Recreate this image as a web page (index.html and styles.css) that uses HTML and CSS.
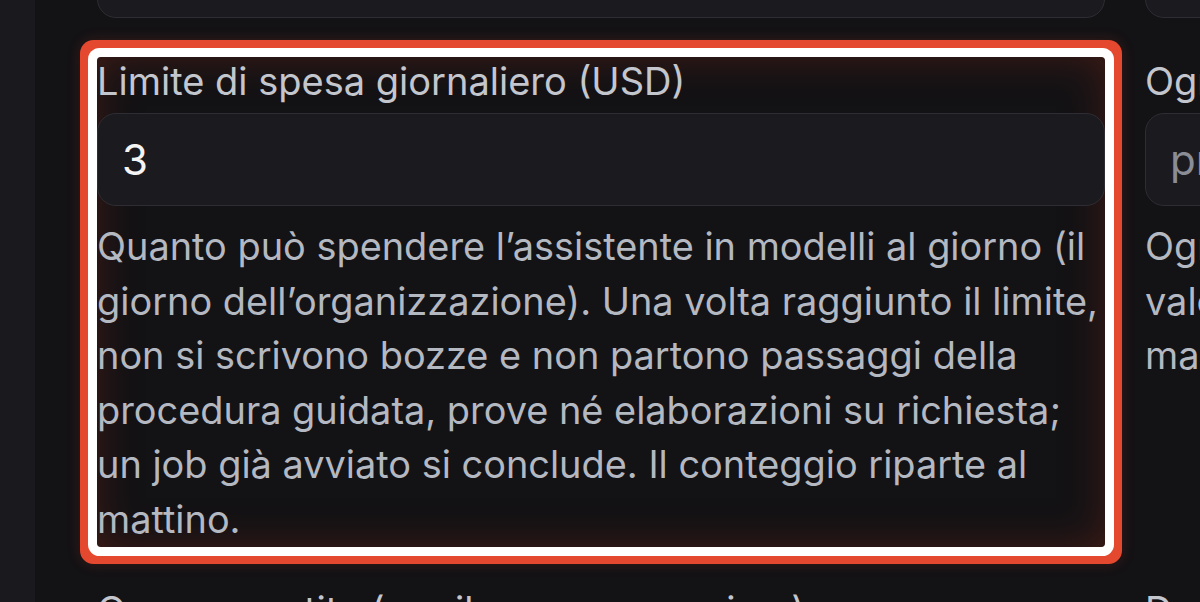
FILE: index.html
```html
<!DOCTYPE html>
<html lang="it">
<head>
<meta charset="utf-8">
<title>Impostazioni</title>
<link rel="stylesheet" href="styles.css">
</head>
<body>
<div class="page">
  <aside class="sidebar"></aside>
  <main class="main">
    <div class="grid">
      <div class="field">
        <div class="input"></div>
      </div>
      <div class="field">
        <div class="input"></div>
      </div>

      <div class="field highlight">
        <label class="label">Limite di spesa giornaliero (USD)</label>
        <div class="input"><span class="value">3</span></div>
        <p class="desc">Quanto può spendere l’assistente in modelli al giorno (il giorno dell’organizzazione). Una volta raggiunto il limite, non si scrivono bozze e non partono passaggi della procedura guidata, prove né elaborazioni su richiesta; un&nbsp;job già avviato si conclude. Il conteggio riparte al mattino.</p>
      </div>
      <div class="field">
        <label class="label">Ogni quanti giorni ricontrollare</label>
        <div class="input"><span class="placeholder">predefinito: 30</span></div>
        <p class="desc nowrap">Ogni quanti giorni l’assistente ricontrolla le bozze; lascia vuoto per il<br>valore predefinito dell’organizzazione, che resta attivo finché non lo cambi<br>manualmente.</p>
      </div>

      <div class="field">
        <label class="label">Ore consentite (per il numero massimo)</label>
      </div>
      <div class="field">
        <label class="label">Durata massima</label>
      </div>
    </div>
  </main>
</div>
</body>
</html>
```

FILE: styles.css
```css
* { box-sizing: border-box; }

html, body {
  margin: 0;
  padding: 0;
  height: 100%;
  overflow: hidden;
  background: #131215;
  font-family: Inter, "Noto Sans", "DejaVu Sans", sans-serif;
}

.page {
  display: flex;
  height: 100%;
  overflow: hidden;
}

.sidebar {
  flex: 0 0 35px;
  background: #1a191e;
}

.main {
  flex: 1 1 auto;
  padding-left: 62px;
  overflow: hidden;
}

.grid {
  display: grid;
  grid-template-columns: 1008px 1008px;
  column-gap: 40px;
  row-gap: 39px;
  margin-top: -75px;
  align-items: start;
}

.field {
  display: flex;
  flex-direction: column;
  min-width: 0;
}

.label {
  display: block;
  font-size: 38px;
  line-height: 49px;
  color: #c3c6cd;
  white-space: nowrap;
  margin-bottom: 7px;
}

.input {
  height: 93px;
  border: 1.5px solid #2e2d33;
  border-radius: 19px;
  background: #1b1a1f;
  display: flex;
  align-items: center;
  padding-left: 24px;
  font-size: 42px;
  color: #f4f4f5;
  white-space: nowrap;
  overflow: hidden;
}

.placeholder {
  color: #8a8d96;
}

.desc {
  margin: 13px 0 0;
  font-size: 37.9px;
  line-height: 54.6px;
  color: #b4b8c1;
}

.desc.nowrap {
  white-space: nowrap;
}

.highlight {
  border-radius: 4px;
  background: #131215;
  box-shadow:
    inset 0 0 40px rgba(110, 38, 22, 0.5),
    0 0 0 9px #ffffff,
    0 0 0 17px #e4482e,
    0 0 14px 17px rgba(228, 72, 46, 0.18);
}
```
